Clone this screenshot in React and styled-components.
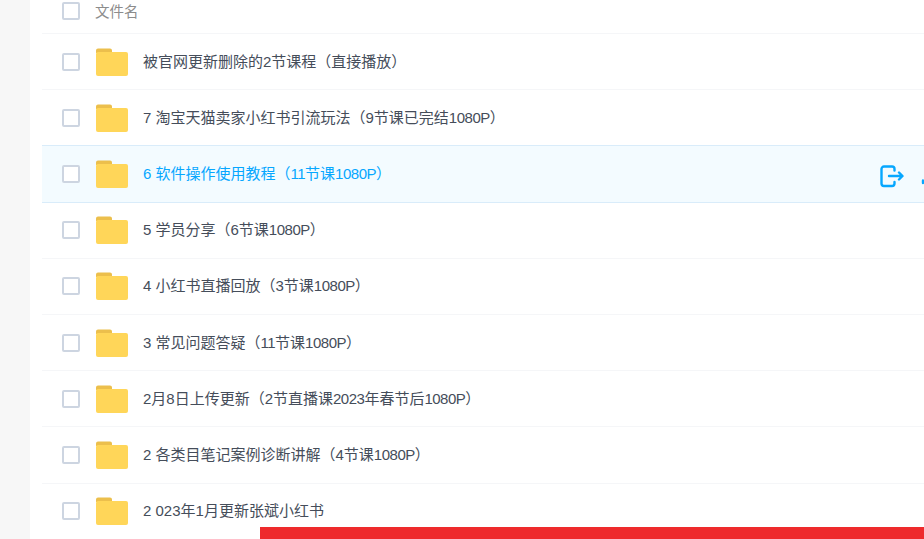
import React from 'react';
import styled, { createGlobalStyle } from 'styled-components';

const GlobalStyle = createGlobalStyle`
  html, body {
    margin: 0;
    height: 539px;
    overflow: hidden;
    background: #fff;
    font-family: "Liberation Sans", "Noto Sans CJK SC", sans-serif;
  }
`;

const Page = styled.div`
  display: flex;
  height: 539px;
  overflow: hidden;
`;

const Side = styled.div`
  flex: 0 0 30px;
  background: #f7f7f7;
`;

const Main = styled.div`
  flex: 1;
  min-width: 0;
  padding-left: 12px;
  background: #fff;
`;

const HeaderRow = styled.div`
  display: flex;
  align-items: center;
  height: 34px;
  padding: 0 0 11px 20px;
  box-sizing: border-box;
  border-bottom: 1px solid #f5f6f8;
`;

const Row = styled.div`
  display: flex;
  align-items: center;
  height: 56.2px;
  padding-left: 20px;
  box-sizing: border-box;
  border-bottom: 1px solid ${({ $active }) => ($active ? '#d9ecfa' : '#f5f6f8')};
  background: ${({ $active }) => ($active ? '#f3fbff' : '#fff')};
  box-shadow: ${({ $active }) => ($active ? '0 -1px 0 #d9ecfa' : 'none')};
  color: ${({ $active }) => ($active ? '#06a7ff' : '#454d5a')};
`;

const Check = styled.span`
  flex: 0 0 auto;
  width: 14px;
  height: 14px;
  border: 2px solid #cdd5e1;
  border-radius: 2px;
  background: #fff;
`;

const HeaderLabel = styled.span`
  margin-left: 15px;
  padding-top: 2px;
  font-size: 14.5px;
  line-height: 20px;
  color: #8c8c8c;
`;

const Folder = styled.svg`
  flex: 0 0 auto;
  margin-left: 16px;
  width: 32px;
  height: 28px;
`;

const Name = styled.span`
  margin-left: 15px;
  font-size: 15px;
  line-height: 20px;
  white-space: nowrap;
`;

// digit runs are tighter in the reference font
const Digits = styled.span`
  letter-spacing: -0.5px;
`;

const Actions = styled.div`
  display: flex;
  gap: 16px;
  margin-left: auto;
  margin-right: -20px;
  padding-top: 4px;
  color: #06a7ff;
`;

const ActionIcon = styled.svg`
  width: 24px;
  height: 24px;
  fill: none;
  stroke: currentColor;
  stroke-width: 2.4;
  stroke-linecap: round;
  stroke-linejoin: round;
`;

const RedBar = styled.div`
  position: absolute;
  left: 260px;
  right: 0;
  top: 527px;
  height: 12px;
  background: #ee2a2c;
`;

const FolderIcon = () => (
  <Folder viewBox="0 0 32 28">
    <path d="M0 2.5A2 2 0 0 1 2 .5h12a2 2 0 0 1 2 2V5H0z" fill="#ecbf4c" />
    <path d="M0 6a2 2 0 0 1 2-2h28a2 2 0 0 1 2 2v20a2 2 0 0 1-2 2H2a2 2 0 0 1-2-2z" fill="#ffd659" />
  </Folder>
);

const rows = [
  '被官网更新删除的2节课程（直接播放）',
  '7 淘宝天猫卖家小红书引流玩法（9节课已完结1080P）',
  '6 软件操作使用教程（11节课1080P）',
  '5 学员分享（6节课1080P）',
  '4 小红书直播回放（3节课1080P）',
  '3 常见问题答疑（11节课1080P）',
  '2月8日上传更新（2节直播课2023年春节后1080P）',
  '2 各类目笔记案例诊断讲解（4节课1080P）',
  '2 023年1月更新张斌小红书',
];

const splitDigits = (name) =>
  name.split(/(1080P|2023|11)/).map((part, i) =>
    i % 2 ? <Digits key={i}>{part}</Digits> : part
  );

const App = () => (
  <Page>
    <GlobalStyle />
    <Side />
    <Main>
      <HeaderRow>
        <Check />
        <HeaderLabel>文件名</HeaderLabel>
      </HeaderRow>
      {rows.map((name, i) => (
        <Row key={name} $active={i === 2}>
          <Check />
          <FolderIcon />
          <Name>{splitDigits(name)}</Name>
          {i === 2 && (
            <Actions>
              <ActionIcon viewBox="0 0 24 24">
                <path d="M14.500 6.500V5a2.500 2.500 0 0 0-2.500-2.500H4A2.500 2.500 0 0 0 1.500 5v14.500A2.500 2.500 0 0 0 4 22h8a2.500 2.500 0 0 0 2.500-2.500V18" />
                <path d="M9 12h13M19 8.500l3.500 3.500-3.500 3.500" />
              </ActionIcon>
              <ActionIcon viewBox="0 0 24 24">
                <path d="M3 16.500v2.500M12 3v13" />
              </ActionIcon>
            </Actions>
          )}
        </Row>
      ))}
    </Main>
    <RedBar />
  </Page>
);

export default App;
